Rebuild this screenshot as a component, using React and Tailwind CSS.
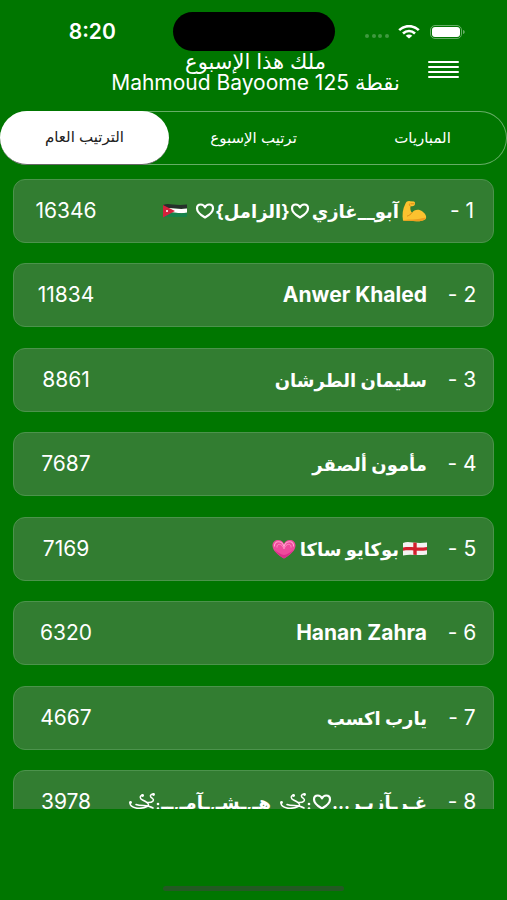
const ROWS = [
  {
    rank: 1,
    score: 16346,
    name: (
      <>
        <Muscle />
        <span className="ms-0.5">آبو__غازي</span>
        <span className="ms-0.5 flex items-center">
          <HeartOutline />
          <span>{"{الزامل}"}</span>
          <HeartOutline />
        </span>
        <span className="ms-2 flex">
          <JordanFlag />
        </span>
      </>
    ),
  },
  { rank: 2, score: 11834, name: <Latin>Anwer Khaled</Latin> },
  { rank: 3, score: 8861, name: <span>سليمان الطرشان</span> },
  { rank: 4, score: 7687, name: <span>مأمون ألصقر</span> },
  {
    rank: 5,
    score: 7169,
    name: (
      <>
        <EnglandFlag />
        <span className="mx-1">بوكايو ساكا</span>
        <GrowingHeart />
      </>
    ),
  },
  { rank: 6, score: 6320, name: <Latin>Hanan Zahra</Latin> },
  { rank: 7, score: 4667, name: <span>يارب اكسب</span> },
  {
    rank: 8,
    score: 3978,
    name: (
      <>
        <span>غـرـآزيـر...</span>
        <HeartOutline />
        <Swirl />
        <span className="ms-2">هـ,ـشـ,ـآمـ,ــ</span>
        <Swirl />
      </>
    ),
  },
];

const TABS = ["المباريات", "ترتيب الإسبوع", "الترتيب العام"];

function Latin({ children }) {
  return <bdi className="text-[21px]">{children}</bdi>;
}

function HeartOutline() {
  return (
    <svg viewBox="0 0 20 18" className="h-[18px] w-5 shrink-0" fill="none" stroke="currentColor" strokeWidth="2.200" strokeLinejoin="round">
      <path d="M10 15.500C5 12.500 2 9.500 2 6.400C2 4 3.700 2.500 5.800 2.500C7.700 2.500 9.200 3.600 10 5.400C10.800 3.600 12.300 2.500 14.200 2.500C16.300 2.500 18 4 18 6.400C18 9.500 15 12.500 10 15.500Z" />
    </svg>
  );
}

function Swirl() {
  return (
    <svg viewBox="0 0 33 20" className="h-5 w-[33px] shrink-0" fill="none" stroke="currentColor" strokeWidth="1.500" strokeLinecap="round">
      <path d="M2 11C2 16 12 18 19 14.500C23 12.500 18 9.500 14.500 8C11 6.500 12 2.500 15 3.500" />
      <path d="M8 12.500C14 14.500 19 12.500 25 16M19 10.500C25 11 27 8 24 6C21.500 4.500 22 2 25.500 2M14 18.500C19 19.500 24 17.500 28 18" />
      <circle cx="2.500" cy="10.500" r="1.400" fill="currentColor" stroke="none" />
      <circle cx="14.500" cy="3.500" r="1.400" fill="currentColor" stroke="none" />
      <circle cx="25.500" cy="2.500" r="1.400" fill="currentColor" stroke="none" />
      <circle cx="30" cy="12" r="1.300" fill="currentColor" stroke="none" />
      <circle cx="30" cy="16.500" r="1.300" fill="currentColor" stroke="none" />
    </svg>
  );
}

function Muscle() {
  return (
    <svg viewBox="0 0 26 22" className="h-[22px] w-[26px] shrink-0">
      <path d="M2 20.500C1 15 1.500 9 4.500 3.500C5.500 1.500 7 .8 9 1.200L13 1.500C14.500 2 14.300 4.500 13.300 5.500C12 6.700 10.500 6 9.500 6.300C9 9 9.500 11.500 11 12.800C13 9.500 18 8.800 21.500 11.500C24.500 13.800 26 17 24.700 19C22 21.800 14 21.500 9 20.800C6 20.400 4 21 2 20.500Z" fill="#fcc22f" />
      <path d="M2 20.500C6 18.500 12 20 17 19C21 18.300 23.500 17 25 18.200C23 21.800 14 21.500 9 20.800C6 20.400 4 21 2 20.500Z" fill="#ee9d20" />
      <path d="M6.500 16C8 15.500 9.500 14.500 11 12.800M9.500 6.300C8.500 5.800 8 5 8.500 4M10 3.800H13" fill="none" stroke="#dc8a14" strokeWidth="1" strokeLinecap="round" />
    </svg>
  );
}

function JordanFlag() {
  return (
    <svg viewBox="0 0 24 16" className="h-4 w-6 shrink-0">
      <path d="M0 2C6-.5 10 3 24 1.500V5.500C14 7 9 4 0 5.500Z" fill="#26302b" />
      <path d="M0 5.500C9 4 14 7 24 5.500V9.800C14 11 9 8.500 0 10Z" fill="#fff" />
      <path d="M0 10C9 8.500 14 11 24 9.800V13.500C14 15 8 12.500 0 14.500Z" fill="#15824a" />
      <path d="M0 2L12 8L0 14.500Z" fill="#d5223c" />
      <circle cx="4" cy="8" r="1" fill="#fff" />
    </svg>
  );
}

function EnglandFlag() {
  return (
    <svg viewBox="0 0 24 16" className="h-4 w-6 shrink-0">
      <path d="M0 2C6-.5 10 3 24 1.500V13.500C14 15 8 12.500 0 14.500Z" fill="#f4f2f1" />
      <path d="M0 6.500C8 5 14 7.500 24 6V9.200C14 10.700 8 8.200 0 9.700Z" fill="#d3202e" />
      <path d="M10.300 1.400L13.700 1.800V14.100L10.300 13.700Z" fill="#d3202e" />
    </svg>
  );
}

function GrowingHeart() {
  return (
    <svg viewBox="0 0 24 20" className="h-5 w-6 shrink-0">
      <path d="M12 19.500C6 16 .5 11.500 .5 6.500C.5 3 3 1 6.200 1C9 1 11 2.400 12 5C13 2.400 15 1 17.800 1C21 1 23.500 3 23.500 6.500C23.500 11.500 18 16 12 19.500Z" fill="#ee4a9c" />
      <path d="M2.500 7.500C2 4.500 4 2.800 6.500 2.800C9 2.800 11 4.500 12 7.500C13 4.500 15 2.800 17.500 2.800C20 2.800 22 4.500 21.500 7.500" fill="none" stroke="#ffa3cc" strokeWidth="1.100" />
      <path d="M5 8.500C4.700 6.500 5.700 5.300 7.300 5.300C9.300 5.300 11 7 12 10C13 7 14.700 5.300 16.700 5.300C18.300 5.300 19.300 6.500 19 8.500" fill="none" stroke="#ff8ac0" strokeWidth="1" />
      <path d="M12 19.500C7.500 17 4 13.800 2 10.500C6 13.800 9 15.500 12 16C15 15.500 18 13.800 22 10.500C20 13.800 16.500 17 12 19.500Z" fill="#dc2d8c" />
    </svg>
  );
}

function StatusBar() {
  return (
    <div className="grid h-[51px] grid-cols-[1fr_162px_1fr] pt-3 text-white">
      <time className="flex items-center justify-center ps-3 text-[21px] font-semibold">8:20</time>
      <div className="h-[39px] rounded-full bg-black" />
      <div className="flex items-center ps-[29px]">
        <svg viewBox="0 0 26 6" className="mt-[9px] h-1.5 w-[26px]" fill="#3f993f">
          <circle cx="3" cy="3" r="2" />
          <circle cx="10" cy="3" r="2" />
          <circle cx="16" cy="3" r="2" />
          <circle cx="23" cy="3" r="2" />
        </svg>
        <svg viewBox="0 0 22 14" className="ms-2 h-3.5 w-[22px]" fill="none" stroke="white" strokeWidth="2.600">
          <path d="M1.200 5.200C6.500-.2 15.500-.2 20.800 5.200" />
          <path d="M5 8.500C8.500 5.200 13.500 5.200 17 8.500" />
          <path d="M11 13.500L7.700 10.700C9.500 9 12.500 9 14.300 10.700Z" fill="white" stroke="none" />
        </svg>
        <svg viewBox="0 0 36 14" className="ms-2.5 h-3.5 w-9">
          <rect x=".5" y=".5" width="31" height="13" rx="4.500" fill="none" stroke="#66ad66" />
          <rect x="2" y="2" width="28" height="10" rx="3" fill="white" />
          <path d="M33 5C35.300 5.500 35.300 8.500 33 9Z" fill="#66ad66" />
        </svg>
      </div>
    </div>
  );
}

export default function App() {
  return (
    <div className="flex h-screen flex-col overflow-hidden bg-[#007600] font-[Inter,'DejaVu_Sans',sans-serif]">
      <StatusBar />
      <header className="grid h-[60px] grid-cols-[1fr_auto_1fr] items-start ps-1 text-white">
        <h1 className="col-start-2 text-center text-[21px] leading-[21px] font-normal">
          <span dir="rtl" className="block">ملك هذا الإسبوع</span>
          <span dir="ltr" className="block">Mahmoud Bayoome 125 نقطة</span>
        </h1>
        <button type="button" aria-label="القائمة" className="ms-7 mt-2.5 flex w-[31px] flex-col gap-[3px]">
          <span className="h-0.5 w-full rounded-full bg-white" />
          <span className="h-0.5 w-full rounded-full bg-white" />
          <span className="h-0.5 w-full rounded-full bg-white" />
          <span className="h-0.5 w-full rounded-full bg-white" />
        </button>
      </header>

      <nav dir="rtl" className="grid h-[54px] shrink-0 grid-cols-3 rounded-full text-[15px] text-white ring-1 ring-[#66ad66] ring-inset">
        {TABS.map((tab, i) => (
          <button
            key={tab}
            type="button"
            className={
              i === 2
                ? "rounded-full border-b border-[#666] bg-white text-[#222]"
                : "rounded-full"
            }
          >
            {tab}
          </button>
        ))}
      </nav>

      <main className="mt-3.5 mb-[91px] min-h-0 flex-1 overflow-hidden px-[13px]">
        <ol dir="rtl" className="grid auto-rows-[84px_85px] grid-cols-1">
          {ROWS.map((row) => (
            <li key={row.rank}>
              <div className="grid h-16 grid-cols-[66px_minmax(0,1fr)_104px] items-center rounded-xl border border-[#4c934c] bg-[#327d31] text-[21px] text-white">
                <span className="pe-1 text-center">{row.rank} -</span>
                <span className="flex items-center text-[18px] font-bold whitespace-nowrap">{row.name}</span>
                <span className="text-center">{row.score}</span>
              </div>
            </li>
          ))}
        </ol>
      </main>
      <div className="fixed inset-x-0 bottom-[9px] mx-auto h-[5px] w-[181px] rounded-full bg-[#235a23]" />
    </div>
  );
}
